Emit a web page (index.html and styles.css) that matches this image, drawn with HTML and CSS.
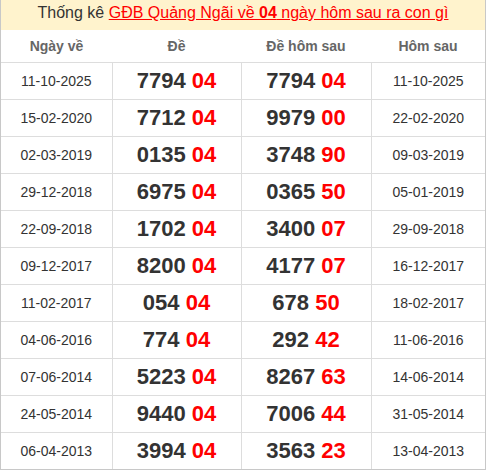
FILE: index.html
```html
<!DOCTYPE html>
<html lang="vi">
<head>
<meta charset="utf-8">
<link rel="stylesheet" href="styles.css">
</head>
<body>
<div class="box">
  <div class="caption">Thống kê <a href="#" class="link">GĐB Quảng Ngãi về <b>04</b> ngày hôm sau ra con gì</a></div>
  <table class="stats">
    <thead>
      <tr><th class="c1">Ngày về</th><th class="c2">Đề</th><th class="c3">Đề hôm sau</th><th class="c4">Hôm sau</th></tr>
    </thead>
    <tbody>
      <tr><td class="date">11-10-2025</td><td class="num">7794 <span class="red">04</span></td><td class="num">7794 <span class="red">04</span></td><td class="date">11-10-2025</td></tr>
      <tr><td class="date">15-02-2020</td><td class="num">7712 <span class="red">04</span></td><td class="num">9979 <span class="red">00</span></td><td class="date">22-02-2020</td></tr>
      <tr><td class="date">02-03-2019</td><td class="num">0135 <span class="red">04</span></td><td class="num">3748 <span class="red">90</span></td><td class="date">09-03-2019</td></tr>
      <tr><td class="date">29-12-2018</td><td class="num">6975 <span class="red">04</span></td><td class="num">0365 <span class="red">50</span></td><td class="date">05-01-2019</td></tr>
      <tr><td class="date">22-09-2018</td><td class="num">1702 <span class="red">04</span></td><td class="num">3400 <span class="red">07</span></td><td class="date">29-09-2018</td></tr>
      <tr><td class="date">09-12-2017</td><td class="num">8200 <span class="red">04</span></td><td class="num">4177 <span class="red">07</span></td><td class="date">16-12-2017</td></tr>
      <tr><td class="date">11-02-2017</td><td class="num">054 <span class="red">04</span></td><td class="num">678 <span class="red">50</span></td><td class="date">18-02-2017</td></tr>
      <tr><td class="date">04-06-2016</td><td class="num">774 <span class="red">04</span></td><td class="num">292 <span class="red">42</span></td><td class="date">11-06-2016</td></tr>
      <tr><td class="date">07-06-2014</td><td class="num">5223 <span class="red">04</span></td><td class="num">8267 <span class="red">63</span></td><td class="date">14-06-2014</td></tr>
      <tr><td class="date">24-05-2014</td><td class="num">9440 <span class="red">04</span></td><td class="num">7006 <span class="red">44</span></td><td class="date">31-05-2014</td></tr>
      <tr><td class="date">06-04-2013</td><td class="num">3994 <span class="red">04</span></td><td class="num">3563 <span class="red">23</span></td><td class="date">13-04-2013</td></tr>
    </tbody>
  </table>
</div>
</body>
</html>
```
FILE: styles.css
```css
html, body {
  margin: 0;
  padding: 0;
  background: #fff;
}
body {
  font-family: "Liberation Sans", Arial, sans-serif;
  color: #333;
}
.box {
  width: 484px;
  border: 1px solid #c8c8c8;
  border-top: none;
  border-bottom-width: 2px;
}
.caption {
  height: 30px;
  line-height: 25px;
  background: #fff3cd;
  text-align: center;
  font-size: 16px;
  color: #333;
}
.link {
  color: #f00;
  text-decoration: underline;
}
.link b {
  font-weight: bold;
}
.stats {
  width: 100%;
  border-collapse: collapse;
  table-layout: fixed;
}
.stats th {
  height: 32px;
  padding: 0;
  font-size: 14px;
  font-weight: bold;
  color: #666;
  text-align: center;
  border-bottom: 1px solid #ddd;
}
.c1 { width: 111px; }
.c2 { width: 129px; }
.c3 { width: 130px; }
.c4 { width: auto; }
.stats td {
  height: 36px;
  padding: 0;
  text-align: center;
  border: 1px solid #ddd;
}
.stats tr td:first-child { border-left: none; }
.stats tr td:last-child { border-right: none; }
.stats tbody tr:last-child td { border-bottom: none; }
.date {
  font-size: 14px;
  color: #333;
}
.num {
  font-size: 22px;
  font-weight: bold;
  color: #333;
}
.red {
  color: #f00;
}
```
